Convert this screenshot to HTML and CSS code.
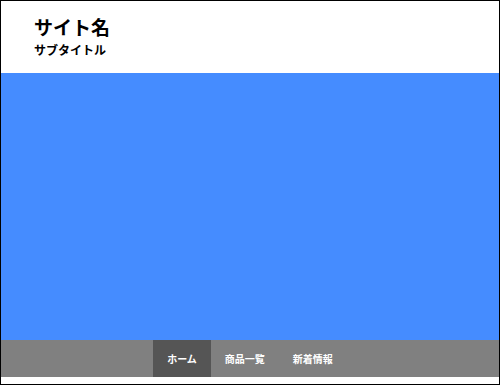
FILE: index.html
```html
<!doctype html>
<html lang="ja">

<head>
    <meta charset="UTF-8">
    <meta name="viewport" content="width=device-width, initial-scale=1.0">
    <link rel="stylesheet" href="styles.css">
    <title>サイト名</title>
</head>

<body>
    <div class="page">
        <header class="site-header">
            <h1 class="site-title">サイト名</h1>
            <p class="site-subtitle">サブタイトル</p>
        </header>
        <main class="hero"></main>
        <nav class="global-nav">
            <a class="nav-link active" href="#">ホーム</a>
            <a class="nav-link" href="#">商品一覧</a>
            <a class="nav-link" href="#">新着情報</a>
        </nav>
    </div>
</body>

</html>
```

FILE: styles.css
```css
html,
body {
    height: 100%;
}

body {
    margin: 0;
    font-family: "Noto Sans CJK JP", "Noto Sans", sans-serif;
    background-color: #ffffff;
}

.page {
    box-sizing: border-box;
    height: 385px;
    border: 1px solid #000000;
    display: flex;
    flex-direction: column;
}

.site-header {
    height: 72px;
    box-sizing: border-box;
    padding: 13px 33px 0;
}

.site-title {
    margin: 0;
    font-size: 19px;
    line-height: 26px;
    font-weight: bold;
    color: #000000;
}

.site-subtitle {
    margin: 2px 0 0;
    font-size: 12px;
    line-height: 16px;
    font-weight: bold;
    color: #000000;
}

.hero {
    height: 267px;
    background-color: #458cff;
}

.global-nav {
    height: 37px;
    display: flex;
    justify-content: center;
    background-color: #808080;
}

.nav-link {
    display: flex;
    align-items: center;
    padding: 0 14px;
    font-size: 10px;
    font-weight: bold;
    color: #ffffff;
    text-decoration: none;
}

.active {
    background-color: #555555;
}
```
